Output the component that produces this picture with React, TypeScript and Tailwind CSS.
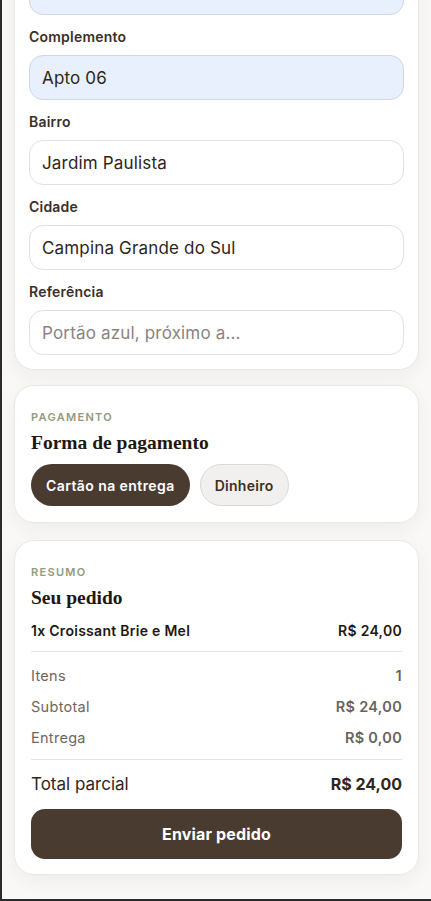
import { useState } from 'react';

const sans = { fontFamily: 'Inter, "Noto Sans", sans-serif' };
const serif = { fontFamily: '"Liberation Serif", "DejaVu Serif", serif' };

function Field({ label, value, placeholder, filled }: { label: string; value?: string; placeholder?: string; filled?: boolean }) {
  return (
    <div>
      <div className="mb-2 text-[14px] leading-5 font-semibold tracking-[0.015em] text-[#3a2f28]">{label}</div>
      <input
        readOnly
        value={value ?? ''}
        placeholder={placeholder}
        className={`block h-[45px] w-full rounded-[14px] border px-3 text-[17px] tracking-[0.01em] text-[#2f2520] placeholder:text-[#8a837e] outline-none ${
          filled ? 'bg-[#e8f0fe] border-[#cfd7e6]' : 'bg-white border-[#e3e0dd]'
        }`}
      />
    </div>
  );
}

function Row({ label, value }: { label: string; value: string }) {
  return (
    <div className="flex items-center justify-between text-[14.5px] leading-5 tracking-[0.02em]">
      <span className="text-[#6f6660]">{label}</span>
      <span className="font-semibold text-[#6b625c]">{value}</span>
    </div>
  );
}

export default function App() {
  const [payment, setPayment] = useState<'card' | 'cash'>('card');

  return (
    <div
      className="h-[901px] overflow-hidden bg-[#f9f8f6] border-l-2 border-b-2 border-[#2b2b2b] flex flex-col justify-end"
      style={sans}
    >
      <div className="px-[12px] pb-6">
        {/* endereço (scrolled, top field cut off) */}
        <div className="rounded-[20px] border border-[#ebe8e5] bg-white p-3.5 shadow-[0_6px_18px_rgba(60,40,30,0.05)]">
          <div className="space-y-3">
            <input readOnly className="block h-[45px] w-full rounded-[14px] border border-[#cfd7e6] bg-[#e8f0fe] outline-none" />
            <Field label="Complemento" value="Apto 06" filled />
            <Field label="Bairro" value="Jardim Paulista" />
            <Field label="Cidade" value="Campina Grande do Sul" />
            <Field label="Referência" placeholder="Portão azul, próximo a..." />
          </div>
        </div>

        {/* pagamento */}
        <div className="mt-[15px] rounded-[20px] border border-[#ebe8e5] bg-white px-4 pt-[22px] pb-4 shadow-[0_6px_18px_rgba(60,40,30,0.05)]">
          <div className="text-[11px] leading-[18px] font-semibold tracking-[0.12em] text-[#949a7c]">PAGAMENTO</div>
          <h3 className="mt-1 text-[19.5px] leading-[26px] font-bold text-[#1f1712]" style={serif}>
            Forma de pagamento
          </h3>
          <div className="mt-2 flex gap-2.5">
            <button
              type="button"
              onClick={() => setPayment('card')}
              className={`h-[42px] rounded-full px-[15px] text-[14px] font-semibold tracking-[0.03em] ${
                payment === 'card' ? 'bg-[#4a3b31] text-white' : 'border border-[#dcd8d4] bg-[#f2f0ee] text-[#3a2f28]'
              }`}
            >
              Cartão na entrega
            </button>
            <button
              type="button"
              onClick={() => setPayment('cash')}
              className={`h-[42px] rounded-full px-[14px] text-[14px] font-semibold tracking-[0.02em] ${
                payment === 'cash' ? 'bg-[#4a3b31] text-white' : 'border border-[#dcd8d4] bg-[#f2f0ee] text-[#3a2f28]'
              }`}
            >
              Dinheiro
            </button>
          </div>
        </div>

        {/* resumo */}
        <div className="mt-[17px] rounded-[20px] border border-[#ebe8e5] bg-white px-4 pt-[22px] pb-[15px] shadow-[0_6px_18px_rgba(60,40,30,0.05)]">
          <div className="text-[11px] leading-[18px] font-semibold tracking-[0.12em] text-[#949a7c]">RESUMO</div>
          <h3 className="mt-1 text-[19.5px] leading-[26px] font-bold text-[#1f1712]" style={serif}>
            Seu pedido
          </h3>
          <div className="mt-2.5 flex items-center justify-between border-b border-[#e6e3e0] pb-2.5 text-[14px] leading-5 font-semibold tracking-[0.02em] text-[#1f1712]">
            <span>1x Croissant Brie e Mel</span>
            <span>R$ 24,00</span>
          </div>
          <div className="space-y-[11px] border-b border-[#e6e3e0] pt-[14px] pb-[11px]">
            <Row label="Itens" value="1" />
            <Row label="Subtotal" value="R$ 24,00" />
            <Row label="Entrega" value="R$ 0,00" />
          </div>
          <div className="flex items-center justify-between pt-3 text-[17px] leading-6">
            <span className="text-[#2f2622]">Total parcial</span>
            <span className="text-[16px] font-bold text-[#2f2622]">R$ 24,00</span>
          </div>
          <button
            type="button"
            className="mt-[13px] h-[50px] w-full rounded-[14px] bg-[#4a3b31] text-[16px] font-bold tracking-[0.01em] text-white"
          >
            Enviar pedido
          </button>
        </div>
      </div>
    </div>
  );
}
